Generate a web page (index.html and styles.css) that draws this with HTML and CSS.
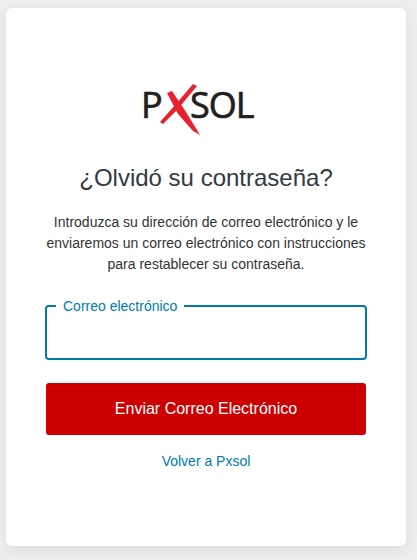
FILE: index.html
```html
<!DOCTYPE html>
<html lang="es">
<head>
    <meta charset="UTF-8">
    <meta name="viewport" content="width=device-width, initial-scale=1.0">
    <title>¿Olvidó su contraseña?</title>
    <link rel="stylesheet" href="styles.css">
</head>
<body>
    <div class="card">
        <div class="logo">
            <svg width="126" height="70" viewBox="-6 -10 126 70">
                <text class="logo-text" x="-2" y="34">P</text>
                <text class="logo-text" x="47" y="34">SOL</text>
                <polygon fill="#e8212e" points="50,0 54,2 34,26 20,40 17,38 33,20"/>
                <polygon fill="#e8212e" points="24,9 29,7 43,28 57,51 50,47 35,30"/>
            </svg>
        </div>
        <h1>¿Olvidó su contraseña?</h1>
        <p class="intro">Introduzca su dirección de correo electrónico y le enviaremos un correo electrónico con instrucciones para restablecer su contraseña.</p>
        <form>
            <fieldset class="field">
                <legend>Correo electrónico</legend>
                <input type="email" aria-label="Correo electrónico">
            </fieldset>
            <button type="button">Enviar Correo Electrónico</button>
        </form>
        <a class="back" href="#">Volver a Pxsol</a>
    </div>
</body>
</html>
```

FILE: styles.css
```css
html, body {
    height: 100%;
}
body {
    margin: 0;
    padding: 8px 11px 14px 6px;
    box-sizing: border-box;
    background: #eeeeee;
    font-family: "Liberation Sans", Arial, sans-serif;
    color: #333a42;
    overflow: hidden;
}
.card {
    height: 538px;
    box-sizing: border-box;
    padding: 66px 40px 0;
    background: white;
    border-radius: 6px;
    box-shadow: 0 4px 14px rgba(0,0,0,0.07);
    text-align: center;
}
.logo {
    height: 70px;
    display: flex;
    justify-content: flex-start;
    margin-left: 91px;
}
.logo-text {
    font-family: "Open Sans", "Liberation Sans", sans-serif;
    font-size: 36px;
    font-weight: 400;
    letter-spacing: -1px;
    stroke: #231f20;
    stroke-width: 0.7px;
    fill: #231f20;
}
h1 {
    margin: 19px 0 0;
    font-size: 24px;
    font-weight: 400;
    line-height: 30px;
}
.intro {
    margin: 19px -2px 0;
    font-size: 14px;
    line-height: 21px;
    color: #333;
}
form {
    margin-top: 23px;
}
.field {
    margin: 0 -1px;
    padding: 0 9px;
    height: 62px;
    box-sizing: border-box;
    border: 2px solid #007bac;
    border-radius: 4px;
    text-align: left;
}
.field legend {
    padding: 0 7px;
    font-size: 14px;
    line-height: 16px;
    color: #007bac;
}
.field input {
    display: block;
    width: 100%;
    height: 36px;
    padding: 0;
    border: none;
    outline: none;
    background: transparent;
    font-family: inherit;
    font-size: 14px;
}
button {
    display: block;
    width: 100%;
    height: 52px;
    margin-top: 23px;
    background: #cc0000;
    color: white;
    border: none;
    border-radius: 3px;
    font-family: inherit;
    font-size: 16px;
    cursor: pointer;
}
.back {
    display: block;
    margin-top: 18px;
    font-size: 14px;
    line-height: 16px;
    color: #007bac;
    text-decoration: none;
}
```
